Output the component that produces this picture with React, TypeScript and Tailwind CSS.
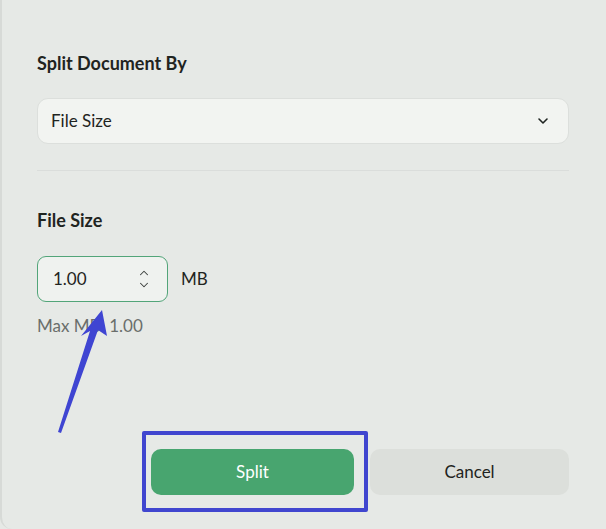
import { ChevronDown, ChevronUp } from 'lucide-react';

export default function App() {
  return (
    <div
      className="relative h-[529px] w-full overflow-hidden bg-[#e6e9e6] text-[#1f2421]"
      style={{ fontFamily: 'Lato, "Noto Sans", sans-serif' }}
    >
      <div className="flex h-full flex-col rounded-bl-xl border-l-2 border-[#d7dad7] pl-[35px] pr-[37px] pt-[50px]">
        <h2 className="text-[18px] font-bold leading-[26px]">Split Document By</h2>

        <button className="mt-[22px] flex h-[46px] w-full items-center justify-between rounded-[11px] border border-[#dcdfdc] bg-[#f2f4f1] pl-[13px] pr-[17px] text-left text-[17px]">
          <span>File Size</span>
          <ChevronDown className="h-4 w-4" strokeWidth={2.4} />
        </button>

        <div className="mt-[26px] h-px w-full bg-[#dadddb]" />

        <h3 className="mt-[36px] text-[18px] font-bold leading-[26px]">File Size</h3>

        <div className="mt-[23px] flex items-center gap-[13px]">
          <div className="flex h-[46px] w-[131px] items-center justify-between rounded-[9px] border-[1.5px] border-[#52a579] bg-[#eff2ef] pl-[15px] pr-[16px]">
            <span className="text-[17px]">1.00</span>
            <span className="flex flex-col items-center text-[#3a3f3c]">
              <ChevronUp className="-mb-[2px] h-[14px] w-[14px]" strokeWidth={1.8} />
              <ChevronDown className="h-[14px] w-[14px]" strokeWidth={1.8} />
            </span>
          </div>
          <span className="text-[17px]">MB</span>
        </div>

        <p className="mt-[12px] text-[17px] leading-6 text-[#6a6e6b]">Max MB: 1.00</p>

        <div className="mt-auto mb-[34px] flex justify-end gap-4">
          <button className="h-[46px] w-[203px] rounded-[10px] bg-[#48a56f] text-[17px] text-white">Split</button>
          <button className="h-[46px] w-[199px] rounded-[10px] bg-[#dcdfdb] text-[17px] text-[#1f2421]">Cancel</button>
        </div>
      </div>

      {/* annotation overlays */}
      <div className="pointer-events-none absolute left-[142px] top-[431px] h-[81px] w-[226px] rounded-[2px] border-[4px] border-[#4046cf]" />
      <svg className="pointer-events-none absolute left-0 top-0" width="606" height="529" viewBox="0 0 606 529">
        <polygon
          points="102,310 107,336 98,330 61,433 58,432 90,331 81,336"
          fill="#3f45d2"
        />
      </svg>
    </div>
  );
}
